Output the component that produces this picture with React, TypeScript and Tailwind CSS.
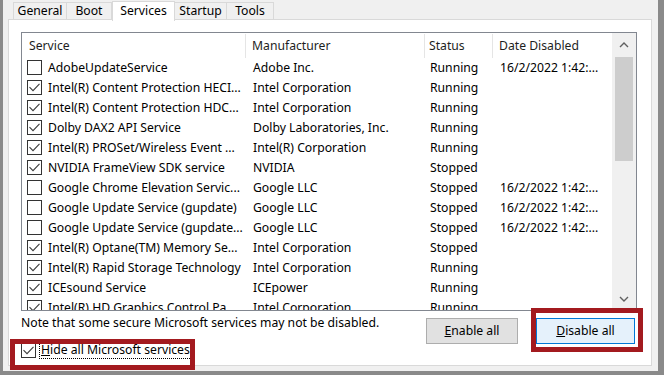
import React from 'react';

type Row = {
  checked: boolean;
  service: string;
  maker: string;
  status: string;
  date?: string;
};

const DATE = '16/2/2022 1:42:...';

const rows: Row[] = [
  { checked: false, service: 'AdobeUpdateService', maker: 'Adobe Inc.', status: 'Running', date: DATE },
  { checked: true, service: 'Intel(R) Content Protection HECI...', maker: 'Intel Corporation', status: 'Running' },
  { checked: true, service: 'Intel(R) Content Protection HDC...', maker: 'Intel Corporation', status: 'Running' },
  { checked: true, service: 'Dolby DAX2 API Service', maker: 'Dolby Laboratories, Inc.', status: 'Running' },
  { checked: true, service: 'Intel(R) PROSet/Wireless Event ...', maker: 'Intel(R) Corporation', status: 'Running' },
  { checked: true, service: 'NVIDIA FrameView SDK service', maker: 'NVIDIA', status: 'Stopped' },
  { checked: false, service: 'Google Chrome Elevation Servic...', maker: 'Google LLC', status: 'Stopped', date: DATE },
  { checked: false, service: 'Google Update Service (gupdate)', maker: 'Google LLC', status: 'Stopped', date: DATE },
  { checked: false, service: 'Google Update Service (gupdate...', maker: 'Google LLC', status: 'Stopped', date: DATE },
  { checked: true, service: 'Intel(R) Optane(TM) Memory Se...', maker: 'Intel Corporation', status: 'Stopped' },
  { checked: true, service: 'Intel(R) Rapid Storage Technology', maker: 'Intel Corporation', status: 'Running' },
  { checked: true, service: 'ICEsound Service', maker: 'ICEpower', status: 'Running' },
  { checked: true, service: 'Intel(R) HD Graphics Control Pa...', maker: 'Intel Corporation', status: 'Running' },
];

const CheckBox = ({ checked }: { checked: boolean }) => (
  <span className="w-[15px] h-[15px] shrink-0 border border-[#333333] bg-white flex items-center justify-center">
    {checked ? (
      <svg width="13" height="13" viewBox="0 0 13 13">
        <path d="M1.5 6.2 L5 9.7 L11.5 2.8" stroke="#3c3c3c" strokeWidth="1.1" fill="none" />
      </svg>
    ) : null}
  </span>
);

const Chevron = ({ down }: { down?: boolean }) => (
  <svg width="10" height="6" viewBox="0 0 10 6">
    <path
      d={down ? 'M1 1 L5 5 L9 1' : 'M1 5 L5 1 L9 5'}
      stroke="#606060"
      strokeWidth="1.4"
      fill="none"
    />
  </svg>
);

const App: React.FC = () => {
  return (
    <div className="relative w-[664px] h-[375px] bg-[#8a8a8a] pl-[3px] pr-[6px] pb-[4px] font-['Noto_Sans',sans-serif] text-[12.2px] text-black overflow-hidden">
      <div className="flex flex-col h-full bg-[#f0f0f0]">
        {/* tabs */}
        <div className="relative z-10 flex h-[20px] items-end pl-[10px]">
          <div className="h-[18px] w-[54px] border border-b-0 border-[#d9d9d9] flex items-center justify-center">General</div>
          <div className="h-[18px] w-[45px] border border-l-0 border-b-0 border-[#d9d9d9] flex items-center justify-center">Boot</div>
          <div className="h-[20px] w-[63px] border border-b-0 border-[#d9d9d9] bg-white flex items-start justify-center leading-[17px] mb-[-1px]">Services</div>
          <div className="h-[18px] w-[52px] border border-l-0 border-b-0 border-[#d9d9d9] flex items-center justify-center">Startup</div>
          <div className="h-[18px] w-[47px] border border-l-0 border-b-0 border-[#d9d9d9] flex items-center justify-center">Tools</div>
        </div>

        {/* tab page */}
        <div className="flex-1 ml-[5px] mr-[6px] mb-[5px] mt-[-1px] border border-[#d9d9d9] bg-white pt-[12px] pl-[12px]">
          <div className="w-[616px] h-[279px] border border-[#828790] flex overflow-hidden">
            <div className="flex-1 flex flex-col overflow-hidden">
              <div className="flex h-[25px] shrink-0 items-center text-[#1e1e1e] pt-[1px]">
                <div className="w-[224px] h-full pl-[7px] flex items-center border-r border-[#e5e5e5]">Service</div>
                <div className="w-[179px] h-full pl-[6px] flex items-center border-r border-[#e5e5e5]">Manufacturer</div>
                <div className="w-[68px] h-full pl-[4px] flex items-center border-r border-[#e5e5e5]">Status</div>
                <div className="flex-1 h-full pl-[6px] flex items-center">Date Disabled</div>
              </div>
              {rows.map((r, i) => (
                <div key={i} className="flex h-[20px] shrink-0 items-center whitespace-nowrap">
                  <div className="w-[224px] pl-[5px] flex items-center gap-[6px] overflow-hidden">
                    <CheckBox checked={r.checked} />
                    <span>{r.service}</span>
                  </div>
                  <div className="w-[179px] pl-[7px] overflow-hidden">{r.maker}</div>
                  <div className="w-[68px] pl-[5px] overflow-hidden">{r.status}</div>
                  <div className="flex-1 pl-[7px] overflow-hidden">{r.date ?? ''}</div>
                </div>
              ))}
            </div>
            {/* scrollbar */}
            <div className="w-[24px] bg-[#f0f0f0] flex flex-col items-center">
              <div className="h-[23px] w-full flex items-center justify-center">
                <Chevron />
              </div>
              <div className="mt-[1px] w-[18px] h-[104px] bg-[#cdcdcd]" />
              <div className="flex-1" />
              <div className="h-[23px] w-full flex items-center justify-center">
                <Chevron down />
              </div>
            </div>
          </div>

          {/* bottom */}
          <div className="w-[616px] flex justify-between items-start">
            <div className="flex flex-col">
              <div className="mt-[4px] leading-[16px]">
                Note that some secure Microsoft services may not be disabled.
              </div>
              <div className="mt-[11px] flex items-center h-[16px]">
                <CheckBox checked />
                <span className="ml-[3px] h-[18px] px-[1px] border border-dotted border-black flex items-center whitespace-nowrap">
                  <span className="underline">H</span>ide all Microsoft services
                </span>
              </div>
            </div>
            <div className="mt-[7px] mr-[2px] flex gap-[18px]">
              <button className="w-[92px] h-[26px] bg-[#e1e1e1] border border-[#adadad] flex items-center justify-center">
                <span className="underline">E</span>nable all
              </button>
              <button className="w-[99px] h-[26px] bg-[#e5f1fb] border border-[#0078d7] flex items-center justify-center">
                <span className="underline">D</span>isable all
              </button>
            </div>
          </div>
        </div>
      </div>

      {/* annotation boxes */}
      <div className="absolute left-[531px] top-[308px] w-[112px] h-[44px] border-[5px] border-[#a31a1f]" />
      <div className="absolute left-[10px] top-[339px] w-[185px] h-[31px] border-[5px] border-[#a31a1f]" />
    </div>
  );
};

export default App;
